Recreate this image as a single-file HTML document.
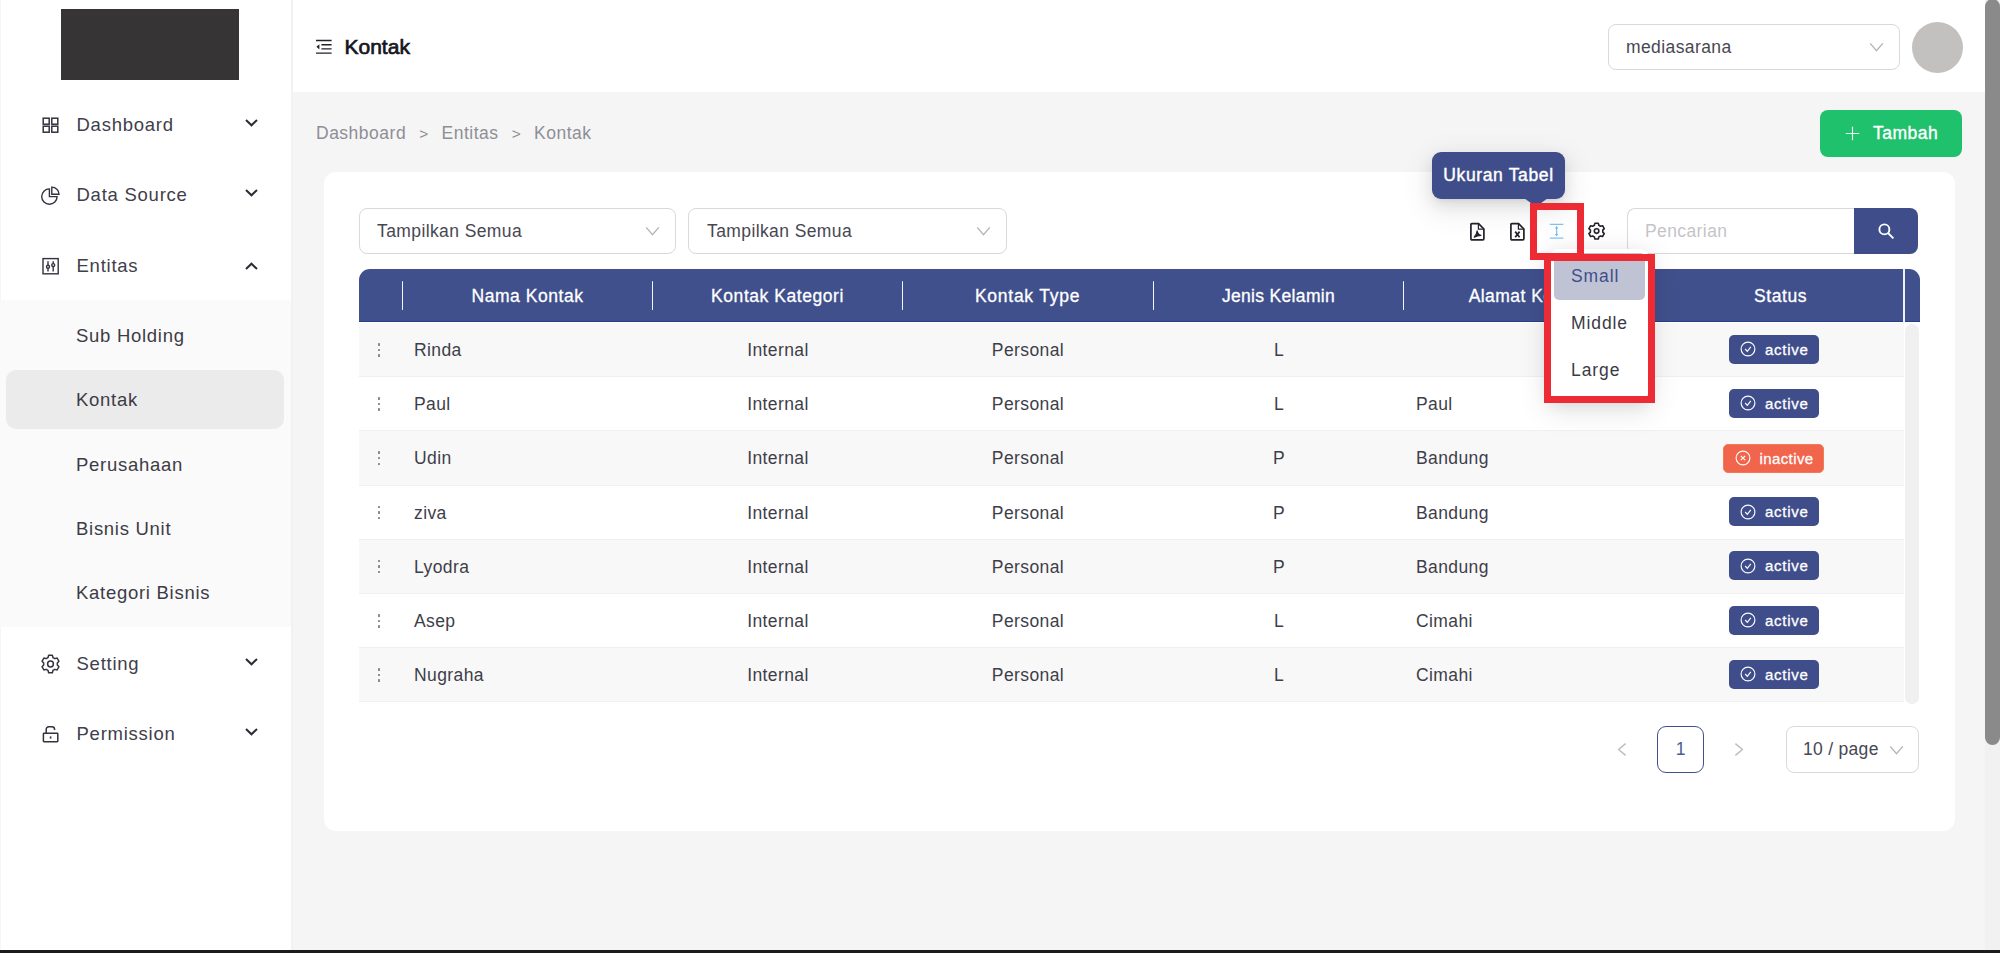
<!DOCTYPE html>
<html lang="id">
<head>
<meta charset="utf-8">
<title>Kontak</title>
<style>
*{box-sizing:border-box;margin:0;padding:0}
html,body{width:2000px;height:953px;overflow:hidden}
body{position:relative;background:#f5f5f5;font-family:"Liberation Sans",sans-serif;font-size:17.5px;color:#2a2a35;letter-spacing:.4px}
.abs{position:absolute}
svg{display:block}
/* sidebar */
#side{position:absolute;left:0;top:0;width:293px;height:950px;background:#fff;border-right:2px solid #f2f2f2;border-left:1px solid #f6f6f6}
#logo{position:absolute;left:60.2px;top:9px;width:178.3px;height:71.2px;background:#363435}
.mi{position:absolute;left:0;width:291px;height:40px;line-height:40px}
.mi .ic{position:absolute;left:41px;top:10px;width:19px;height:20px}
.mi .tx{position:absolute;left:76.5px;top:0;font-size:18.5px;letter-spacing:.75px;color:#40404b;white-space:nowrap}
.mi .ch{position:absolute;left:245px;top:14px;width:13px;height:8px}
#sub{position:absolute;left:0;top:300px;width:291px;height:327px;background:#fafafa}
#sel{position:absolute;left:6px;top:370px;width:278px;height:59px;border-radius:10px;background:#ebebeb}
.si{position:absolute;left:76px;height:40px;line-height:40px;font-size:18.5px;letter-spacing:.72px;color:#3c3c47;white-space:nowrap}
/* header */
#head{position:absolute;left:293px;top:0;width:1692px;height:92px;background:#fff}
#title{position:absolute;left:344.5px;top:27px;height:40px;line-height:40px;font-size:21px;color:#16161e;letter-spacing:0;-webkit-text-stroke:.7px #16161e}
.sel{position:absolute;height:46px;border:1px solid #d9d9d9;border-radius:8px;background:#fff;line-height:44px;padding-left:17px;white-space:nowrap;color:#474752}
.sel svg{position:absolute;right:15px;top:16px}
#avatar{position:absolute;left:1912px;top:22px;width:51px;height:51px;border-radius:50%;background:#c3c0c0}
/* breadcrumb */
#bc{position:absolute;left:316px;top:113px;height:40px;line-height:40px;color:#8e8e96;white-space:nowrap;font-size:17.5px;letter-spacing:.5px}
#bc span{margin:0 13.2px;letter-spacing:0;font-size:15.5px;position:relative;top:-.5px}
#add{position:absolute;left:1820px;top:110px;width:142px;height:47px;border-radius:8px;background:#20c16c;color:#fff}
#add .t{position:absolute;left:53px;top:0;line-height:46px;font-size:17.5px;letter-spacing:.5px;-webkit-text-stroke:.35px #fff}
#card{position:absolute;left:324px;top:172px;width:1631px;height:659px;border-radius:12px;background:#fff}
/* table */
#th{position:absolute;left:359px;top:269px;width:1560.6px;height:53.3px;background:#40508c;border-radius:11px 11px 0 0;color:#fff;border-bottom:1.3px solid #263f8a}
#th .h{position:absolute;top:0;height:53px;line-height:55px;text-align:center;font-size:17.5px;letter-spacing:.55px;-webkit-text-stroke:.3px #fff;white-space:nowrap}
#th i{position:absolute;margin-left:-.5px;top:11.5px;width:1.3px;height:29.5px;background:#f4f5fa;border-radius:1px}
.row{position:absolute;left:359px;width:1545.4px;height:54.2px;border-bottom:1px solid #f0f0f0;line-height:54px;color:#3e3e49}
.row.g{background:#f8f8f8}
.row span{position:absolute;top:0;white-space:nowrap}
.row .c{text-align:center;width:250px}
.dots{position:absolute;left:18px;top:20px;width:4px;height:15px}
.dots b{display:block;width:2.5px;height:2.5px;margin:0 0 3.1px .8px;background:#898991;border-radius:.5px}
.tag{position:absolute;height:29px;border-radius:5px;color:#fff;font-size:15px;line-height:29px;letter-spacing:.75px}
.tag.a{left:1370px;width:90px;background:#3f4e8b}
.tag.n{left:1364px;width:101px;background:#f0654b;border:1px solid #f37a55}
.tag svg{position:absolute;left:11px;top:6.5px}
.tag em{font-style:normal;position:absolute;left:36px;top:0;-webkit-text-stroke:.3px #fff}
.tag.n em{top:-.5px;left:35.5px;letter-spacing:.4px}
.tag.n svg{left:10.5px;top:5.8px}
.dd{height:47px;line-height:46px;font-size:17.5px;letter-spacing:.9px;color:#3a3a46;white-space:nowrap}
</style>
</head>
<body>
<!-- SIDEBAR -->
<div id="side">
  <div id="logo"></div>
</div>
<div id="sub"></div>
<div id="sel"></div>

<div class="mi" style="top:105px">
  <svg class="ic" viewBox="0 0 19 20" fill="none" stroke="#33333f" stroke-width="1.5"><rect x="2.2" y="3.2" width="6" height="6"/><rect x="10.8" y="3.2" width="6" height="6"/><rect x="2.2" y="11.2" width="6" height="6"/><rect x="10.8" y="11.2" width="6" height="6"/></svg>
  <div class="tx">Dashboard</div>
  <svg class="ch" viewBox="0 0 13 8" fill="none" stroke="#2b2b33" stroke-width="2"><path d="M1 1 L6.5 6.3 L12 1"/></svg>
</div>
<div class="mi" style="top:175px">
  <svg class="ic" viewBox="0 0 19 20" fill="none" stroke="#33333f" stroke-width="1.4"><path d="M8.4 3.9 A7.7 7.7 0 1 0 16.1 11.6 L8.4 11.6 Z"/><path d="M10.8 2.1 A7.2 7.2 0 0 1 18 9.3 L10.8 9.3 Z"/></svg>
  <div class="tx">Data Source</div>
  <svg class="ch" viewBox="0 0 13 8" fill="none" stroke="#2b2b33" stroke-width="2"><path d="M1 1 L6.5 6.3 L12 1"/></svg>
</div>
<div class="mi" style="top:246px">
  <svg class="ic" viewBox="0 0 19 20" fill="none" stroke="#33333f" stroke-width="1.4"><rect x="2" y="2.6" width="15.2" height="15.2"/><path d="M7 5.2 V9 M7 12.4 V15.4 M12.2 5.2 V7.4 M12.2 10.8 V15.4"/><circle cx="7" cy="10.7" r="1.5"/><circle cx="12.2" cy="9.1" r="1.5"/></svg>
  <div class="tx">Entitas</div>
  <svg class="ch" viewBox="0 0 13 8" fill="none" stroke="#2b2b33" stroke-width="2" style="top:16px"><path d="M1 7 L6.5 1.7 L12 7"/></svg>
</div>
<div class="si" style="top:316px">Sub Holding</div>
<div class="si" style="top:380px">Kontak</div>
<div class="si" style="top:445px">Perusahaan</div>
<div class="si" style="top:509px">Bisnis Unit</div>
<div class="si" style="top:573px">Kategori Bisnis</div>
<div class="mi" style="top:644px">
  <svg class="ic" viewBox="0 0 19 20" fill="none" stroke="#33333f" stroke-width="1.5" stroke-linejoin="round"><path d="M11.97 3.56 L11.35 1.29 L7.65 1.29 L7.03 3.56 L5.16 4.64 L2.89 4.04 L1.04 7.25 L2.68 8.92 L2.68 11.08 L1.04 12.75 L2.89 15.96 L5.16 15.36 L7.03 16.44 L7.65 18.71 L11.35 18.71 L11.97 16.44 L13.84 15.36 L16.11 15.96 L17.96 12.75 L16.32 11.08 L16.32 8.92 L17.96 7.25 L16.11 4.04 L13.84 4.64 Z"/><circle cx="9.5" cy="10" r="2.9"/></svg>
  <div class="tx">Setting</div>
  <svg class="ch" viewBox="0 0 13 8" fill="none" stroke="#2b2b33" stroke-width="2"><path d="M1 1 L6.5 6.3 L12 1"/></svg>
</div>
<div class="mi" style="top:714px">
  <svg class="ic" viewBox="0 0 19 20" fill="none" stroke="#33333f" stroke-width="1.5"><rect x="2.4" y="9.3" width="14.4" height="8.4" rx=".6"/><path d="M5.2 9.3 V5.4 A2.6 2.6 0 0 1 7.8 2.8 H11 A2.6 2.6 0 0 1 13.6 5.4 V6"/><path d="M9.6 12.4 V14.6" stroke-width="1.6"/></svg>
  <div class="tx">Permission</div>
  <svg class="ch" viewBox="0 0 13 8" fill="none" stroke="#2b2b33" stroke-width="2"><path d="M1 1 L6.5 6.3 L12 1"/></svg>
</div>

<!-- HEADER -->
<div id="head"></div>
<svg class="abs" style="left:316px;top:39px" width="16" height="16" viewBox="0 0 16 16" fill="none" stroke="#22222a" stroke-width="1.4"><path d="M0 1.5 H15.6 M5.4 5.7 H15.6 M5.4 9.9 H15.6 M0 14.1 H15.6"/><path d="M3.4 5.2 L.4 7.8 L3.4 10.4 Z" fill="#22222a" stroke="none"/></svg>
<div id="title">Kontak</div>
<div class="sel" style="left:1608px;top:24px;width:292px">mediasarana<svg width="15" height="12" viewBox="0 0 15 12" fill="none" stroke="#b5b5b5" stroke-width="1.4"><path d="M1.2 2.4 L7.5 9.6 L13.8 2.4"/></svg></div>
<div id="avatar"></div>

<!-- BREADCRUMB -->
<div id="bc">Dashboard<span>&gt;</span>Entitas<span>&gt;</span>Kontak</div>
<div id="add"><svg class="abs" style="left:25px;top:16px" width="15" height="15" viewBox="0 0 15 15" fill="none" stroke="#eafaf1" stroke-width="1.15"><path d="M7.5 .8 V14.2 M.8 7.5 H14.2"/></svg><div class="t">Tambah</div></div>

<div id="card"></div>
<!-- FILTERS -->
<div class="sel" style="left:359px;top:208px;width:317px">Tampilkan Semua<svg width="15" height="12" viewBox="0 0 15 12" fill="none" stroke="#b5b5b5" stroke-width="1.4"><path d="M1.2 2.4 L7.5 9.6 L13.8 2.4"/></svg></div>
<div class="sel" style="left:688px;top:208px;width:319px;padding-left:18px">Tampilkan Semua<svg width="15" height="12" viewBox="0 0 15 12" fill="none" stroke="#b5b5b5" stroke-width="1.4"><path d="M1.2 2.4 L7.5 9.6 L13.8 2.4"/></svg></div>
<!-- TABLE -->
<div id="th">
<i style="left:43px"></i><div class="h" style="left:43px;width:251px;letter-spacing:0.55px">Nama Kontak</div>
<i style="left:293px"></i><div class="h" style="left:293px;width:251px;letter-spacing:0.55px">Kontak Kategori</div>
<i style="left:543px"></i><div class="h" style="left:543px;width:251px;letter-spacing:0.75px">Kontak Type</div>
<i style="left:794px"></i><div class="h" style="left:794px;width:251px;letter-spacing:0.32px">Jenis Kelamin</div>
<i style="left:1044px"></i><div class="h" style="left:1044px;width:251px;letter-spacing:0.45px">Alamat Kontak</div>
<i style="left:1294px"></i><div class="h" style="left:1296px;width:251px;letter-spacing:0.6px">Status</div>
<i style="left:1544.4px;top:0;height:53px;width:2px;background:#eef0f6;border-radius:0"></i>
</div>
<div class="row g" style="top:323.0px"><div class="dots"><b></b><b></b><b></b></div><span style="left:55px">Rinda</span><span class="c" style="left:294px">Internal</span><span class="c" style="left:544px">Personal</span><span class="c" style="left:795px">L</span><div class="tag a" style="top:11.7px"><svg width="16" height="16" viewBox="0 0 16 16" fill="none" stroke="#fff" stroke-width="1.15"><circle cx="8" cy="8" r="6.9"/><path d="M5.2 8 L7.3 10.3 L10.8 5.9"/></svg><em>active</em></div></div>
<div class="row" style="top:377.2px"><div class="dots"><b></b><b></b><b></b></div><span style="left:55px">Paul</span><span class="c" style="left:294px">Internal</span><span class="c" style="left:544px">Personal</span><span class="c" style="left:795px">L</span><span style="left:1057px">Paul</span><div class="tag a" style="top:11.7px"><svg width="16" height="16" viewBox="0 0 16 16" fill="none" stroke="#fff" stroke-width="1.15"><circle cx="8" cy="8" r="6.9"/><path d="M5.2 8 L7.3 10.3 L10.8 5.9"/></svg><em>active</em></div></div>
<div class="row g" style="top:431.4px"><div class="dots"><b></b><b></b><b></b></div><span style="left:55px">Udin</span><span class="c" style="left:294px">Internal</span><span class="c" style="left:544px">Personal</span><span class="c" style="left:795px">P</span><span style="left:1057px">Bandung</span><div class="tag n" style="top:12.2px"><svg width="16" height="16" viewBox="0 0 16 16" fill="none" stroke="#fff" stroke-width="1.15"><circle cx="8" cy="8" r="6.9"/><path d="M5.8 5.8 L10.2 10.2 M10.2 5.8 L5.8 10.2"/></svg><em>inactive</em></div></div>
<div class="row" style="top:485.6px"><div class="dots"><b></b><b></b><b></b></div><span style="left:55px">ziva</span><span class="c" style="left:294px">Internal</span><span class="c" style="left:544px">Personal</span><span class="c" style="left:795px">P</span><span style="left:1057px">Bandung</span><div class="tag a" style="top:11.7px"><svg width="16" height="16" viewBox="0 0 16 16" fill="none" stroke="#fff" stroke-width="1.15"><circle cx="8" cy="8" r="6.9"/><path d="M5.2 8 L7.3 10.3 L10.8 5.9"/></svg><em>active</em></div></div>
<div class="row g" style="top:539.8px"><div class="dots"><b></b><b></b><b></b></div><span style="left:55px">Lyodra</span><span class="c" style="left:294px">Internal</span><span class="c" style="left:544px">Personal</span><span class="c" style="left:795px">P</span><span style="left:1057px">Bandung</span><div class="tag a" style="top:11.7px"><svg width="16" height="16" viewBox="0 0 16 16" fill="none" stroke="#fff" stroke-width="1.15"><circle cx="8" cy="8" r="6.9"/><path d="M5.2 8 L7.3 10.3 L10.8 5.9"/></svg><em>active</em></div></div>
<div class="row" style="top:594.0px"><div class="dots"><b></b><b></b><b></b></div><span style="left:55px">Asep</span><span class="c" style="left:294px">Internal</span><span class="c" style="left:544px">Personal</span><span class="c" style="left:795px">L</span><span style="left:1057px">Cimahi</span><div class="tag a" style="top:11.7px"><svg width="16" height="16" viewBox="0 0 16 16" fill="none" stroke="#fff" stroke-width="1.15"><circle cx="8" cy="8" r="6.9"/><path d="M5.2 8 L7.3 10.3 L10.8 5.9"/></svg><em>active</em></div></div>
<div class="row g" style="top:648.2px"><div class="dots"><b></b><b></b><b></b></div><span style="left:55px">Nugraha</span><span class="c" style="left:294px">Internal</span><span class="c" style="left:544px">Personal</span><span class="c" style="left:795px">L</span><span style="left:1057px">Cimahi</span><div class="tag a" style="top:11.7px"><svg width="16" height="16" viewBox="0 0 16 16" fill="none" stroke="#fff" stroke-width="1.15"><circle cx="8" cy="8" r="6.9"/><path d="M5.2 8 L7.3 10.3 L10.8 5.9"/></svg><em>active</em></div></div>

<!-- table scrollbar -->
<div class="abs" style="left:1905.3px;top:324px;width:14px;height:379.5px;border-radius:7px;background:#f0f0f0"></div>
<!-- TOOLBAR ICONS -->
<svg class="abs" style="left:1468.5px;top:221.5px" width="17" height="20" viewBox="0 0 17 20" fill="none" stroke="#22222a" stroke-width="1.7" stroke-linejoin="round"><path d="M3 1.7 H9.6 L14.9 7 V16.8 Q14.9 17.9 13.8 17.9 H3 Q1.9 17.9 1.9 16.8 V2.8 Q1.9 1.7 3 1.7 Z"/><path d="M9.4 2 V7.2 H14.6" stroke-width="1.2"/><path d="M5.2 15.2 C6.8 13.4 7.8 11.4 8.1 8.8 C8.7 11.6 10 13 12 13.4 C9.6 13.4 7.2 14 5.2 15.2 Z" stroke-width="1.1" fill="#22222a"/></svg>
<svg class="abs" style="left:1508.5px;top:221.5px" width="17" height="20" viewBox="0 0 17 20" fill="none" stroke="#22222a" stroke-width="1.7" stroke-linejoin="round"><path d="M3 1.7 H9.6 L14.9 7 V16.8 Q14.9 17.9 13.8 17.9 H3 Q1.9 17.9 1.9 16.8 V2.8 Q1.9 1.7 3 1.7 Z"/><path d="M9.4 2 V7.2 H14.6" stroke-width="1.2"/><path d="M6.2 9.6 L10.6 15.2 M10.6 9.6 L6.2 15.2" stroke-width="1.7"/></svg>
<svg class="abs" style="left:1548.5px;top:222px" width="16" height="18" viewBox="0 0 16 18" fill="none" stroke="#85c2f4" stroke-width="1.2"><path d="M.8 2.3 H14.4 M.8 16 H14.4 M7.6 5.6 V12.6" stroke-width="1.25"/><path d="M7.6 4 L9.3 6.4 H5.9 Z M7.6 14.3 L9.3 11.9 H5.9 Z" fill="#6db4f2" stroke="none"/></svg>
<svg class="abs" style="left:1587.5px;top:222px" width="17.2" height="18.2" viewBox="0 0 19 20" fill="none" stroke="#22222a" stroke-width="1.75" stroke-linejoin="round"><path d="M11.97 3.56 L11.35 1.29 L7.65 1.29 L7.03 3.56 L5.16 4.64 L2.89 4.04 L1.04 7.25 L2.68 8.92 L2.68 11.08 L1.04 12.75 L2.89 15.96 L5.16 15.36 L7.03 16.44 L7.65 18.71 L11.35 18.71 L11.97 16.44 L13.84 15.36 L16.11 15.96 L17.96 12.75 L16.32 11.08 L16.32 8.92 L17.96 7.25 L16.11 4.04 L13.84 4.64 Z"/><circle cx="9.5" cy="10" r="2.5"/></svg>
<!-- SEARCH -->
<div class="abs" style="left:1627px;top:208px;width:228px;height:46px;border:1px solid #d9d9d9;border-right:0;border-radius:8px 0 0 8px;background:#fff;line-height:44px;padding-left:17px;color:#c4c4c8;letter-spacing:.4px">Pencarian</div>
<div class="abs" style="left:1854px;top:208px;width:64px;height:46px;border-radius:0 8px 8px 0;background:#3f4e8b"><svg class="abs" style="left:23px;top:14px" width="18" height="18" viewBox="0 0 18 18" fill="none" stroke="#fff" stroke-width="1.9"><circle cx="7.4" cy="7.4" r="5"/><path d="M11 11 L16.4 16.4"/></svg></div>
<!-- PAGINATION -->
<svg class="abs" style="left:1616px;top:742px" width="12" height="15" viewBox="0 0 12 15" fill="none" stroke="#bdbdbd" stroke-width="1.4"><path d="M9.6 1.6 L2.6 7.5 L9.6 13.4"/></svg>
<div class="abs" style="left:1657px;top:726px;width:47px;height:47px;border:1.5px solid #40508c;border-radius:9px;background:#fff;text-align:center;line-height:44px;color:#4d5c96;letter-spacing:0">1</div>
<svg class="abs" style="left:1733px;top:742px" width="12" height="15" viewBox="0 0 12 15" fill="none" stroke="#bdbdbd" stroke-width="1.4"><path d="M2.4 1.6 L9.4 7.5 L2.4 13.4"/></svg>
<div class="sel" style="left:1786px;top:726px;width:133px;height:47px;line-height:45px;padding-left:16px;letter-spacing:.3px">10 / page<svg style="right:14px;top:17px" width="15" height="12" viewBox="0 0 15 12" fill="none" stroke="#b5b5b5" stroke-width="1.4"><path d="M1.2 2.4 L7.5 9.6 L13.8 2.4"/></svg></div>
<!-- TOOLTIP -->
<div class="abs" style="left:1432px;top:152px;width:133px;height:47px;border-radius:9px;background:#3f4e8b;box-shadow:0 6px 16px rgba(0,0,0,.1),0 3px 6px -4px rgba(0,0,0,.14),0 9px 28px 8px rgba(0,0,0,.06);color:#fff;text-align:center;line-height:46px;font-size:17.5px;letter-spacing:.65px;-webkit-text-stroke:.4px #fff;white-space:nowrap">Ukuran Tabel</div>
<svg class="abs" style="left:1524px;top:198px" width="24" height="8" viewBox="0 0 24 8"><path d="M0 0 H24 L14 7.2 Q12 8.4 10 7.2 Z" fill="#3f4e8b"/></svg>
<!-- DROPDOWN -->
<div class="abs" style="left:1549px;top:249px;width:100px;height:150px;border-radius:9px;background:#fff;box-shadow:0 6px 16px rgba(0,0,0,.1),0 3px 6px -4px rgba(0,0,0,.14),0 9px 28px 8px rgba(0,0,0,.07)"></div>
<div class="abs" style="left:1553.5px;top:253px;width:91px;height:47px;border-radius:5px;background:#c0c3d4"></div>
<div class="abs dd" style="left:1571px;top:253px;color:#3f4e8b">Small</div>
<div class="abs dd" style="left:1571px;top:300px">Middle</div>
<div class="abs dd" style="left:1571px;top:347px">Large</div>
<!-- RED ANNOTATIONS -->
<div class="abs" style="left:1543.5px;top:254px;width:111px;height:149px;border:7px solid #ec2b34"></div>
<div class="abs" style="left:1530px;top:203px;width:54px;height:57px;border:7px solid #ec2b34"></div>
<!-- PAGE SCROLLBAR -->
<div class="abs" style="left:1985px;top:0;width:15px;height:950px;background:#f1f1f1"></div>
<div class="abs" style="left:1985px;top:-1px;width:15px;height:746px;border-radius:7.5px;background:#8a8a8a"></div>
<!-- BOTTOM BAR -->
<div class="abs" style="left:0;top:950px;width:2000px;height:3px;background:#1b1b1b"></div>
</body>
</html>
